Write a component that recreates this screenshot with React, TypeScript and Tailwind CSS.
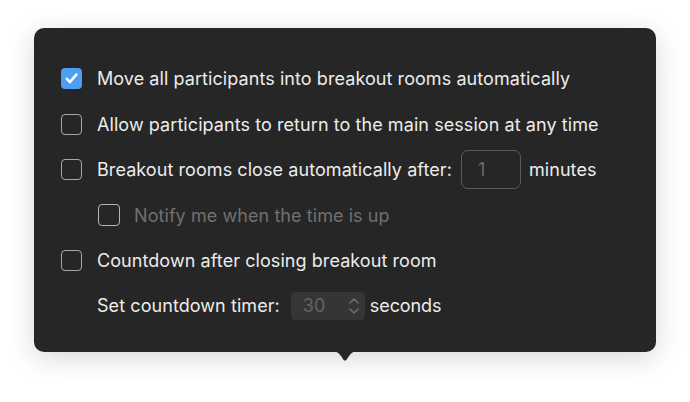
import React from "react";

function Box({ checked = false, small = false }: { checked?: boolean; small?: boolean }) {
  if (checked) {
    return (
      <div className="flex h-[21px] w-[21px] shrink-0 items-center justify-center rounded-[4px] bg-[#4c9ff3]">
        <svg width="15" height="15" viewBox="0 0 15 15" fill="none">
          <path d="M2.8 7.8 L6 11 L12.3 3.6" stroke="white" strokeWidth="2.6" strokeLinecap="round" strokeLinejoin="round" />
        </svg>
      </div>
    );
  }
  return (
    <div
      className={
        small
          ? "h-[22px] w-[22px] shrink-0 rounded-[4px] border-[1.5px] border-[#b4b4b4]"
          : "h-[21px] w-[21px] shrink-0 rounded-[4px] border-[1.5px] border-[#a8a8a8]"
      }
    />
  );
}

export default function App() {
  return (
    <div className="h-[402px] w-[690px] overflow-hidden bg-white pt-[28px]" style={{ fontFamily: "Inter, 'Noto Sans', sans-serif" }}>
      <div className="relative ml-[34px] h-[324px] w-[622px] rounded-[10px] bg-[#262626] text-[18px] tracking-[0.07px] text-[#ececec] shadow-[0_6px_28px_rgba(0,0,0,0.16)]">
        <div className="flex flex-col pl-[27px] pt-[27px]">
          <div className="flex h-[46px] items-center gap-[15px]">
            <Box checked />
            <span>Move all participants into breakout rooms automatically</span>
          </div>
          <div className="flex h-[46px] items-center gap-[15px]">
            <Box />
            <span>Allow participants to return to the main session at any time</span>
          </div>
          <div className="flex h-[45px] items-center gap-[15px]">
            <Box />
            <span>Breakout rooms close automatically after:</span>
            <div className="ml-[-6px] flex h-[39px] w-[60px] items-center rounded-[7px] border-[1.5px] border-[#5c5c5e] pl-[16px] text-[#6a6a6a]">
              1
            </div>
            <span className="ml-[-7px]">minutes</span>
          </div>
          <div className="flex h-[46px] items-center gap-[14px] pl-[37px]">
            <Box small />
            <span className="text-[#707070]">Notify me when the time is up</span>
          </div>
          <div className="flex h-[45px] items-center gap-[15px]">
            <Box />
            <span>Countdown after closing breakout room</span>
          </div>
          <div className="flex h-[45px] items-center pl-[36px]">
            <span>Set countdown timer:</span>
            <div className="ml-[11px] flex h-[28px] w-[74px] items-center justify-between rounded-[4px] bg-[#353535] pl-[12px] pr-[5px] text-[#646464]">
              <span>30</span>
              <svg width="12" height="20" viewBox="0 0 12 20" fill="none">
                <path d="M2 7 L6 3 L10 7" stroke="#6e6e6e" strokeWidth="1.6" strokeLinecap="round" strokeLinejoin="round" />
                <path d="M2 13 L6 17 L10 13" stroke="#6e6e6e" strokeWidth="1.6" strokeLinecap="round" strokeLinejoin="round" />
              </svg>
            </div>
            <span className="ml-[5px] tracking-[-0.1px]">seconds</span>
          </div>
        </div>
        <svg className="absolute left-[296px] top-[323px]" width="30" height="11" viewBox="0 0 30 11">
          <path d="M0 0 C6 0 8 1 11 5 L13 8 C14 10 16 10 17 8 L19 5 C22 1 24 0 30 0 Z" fill="#262626" />
        </svg>
      </div>
    </div>
  );
}
